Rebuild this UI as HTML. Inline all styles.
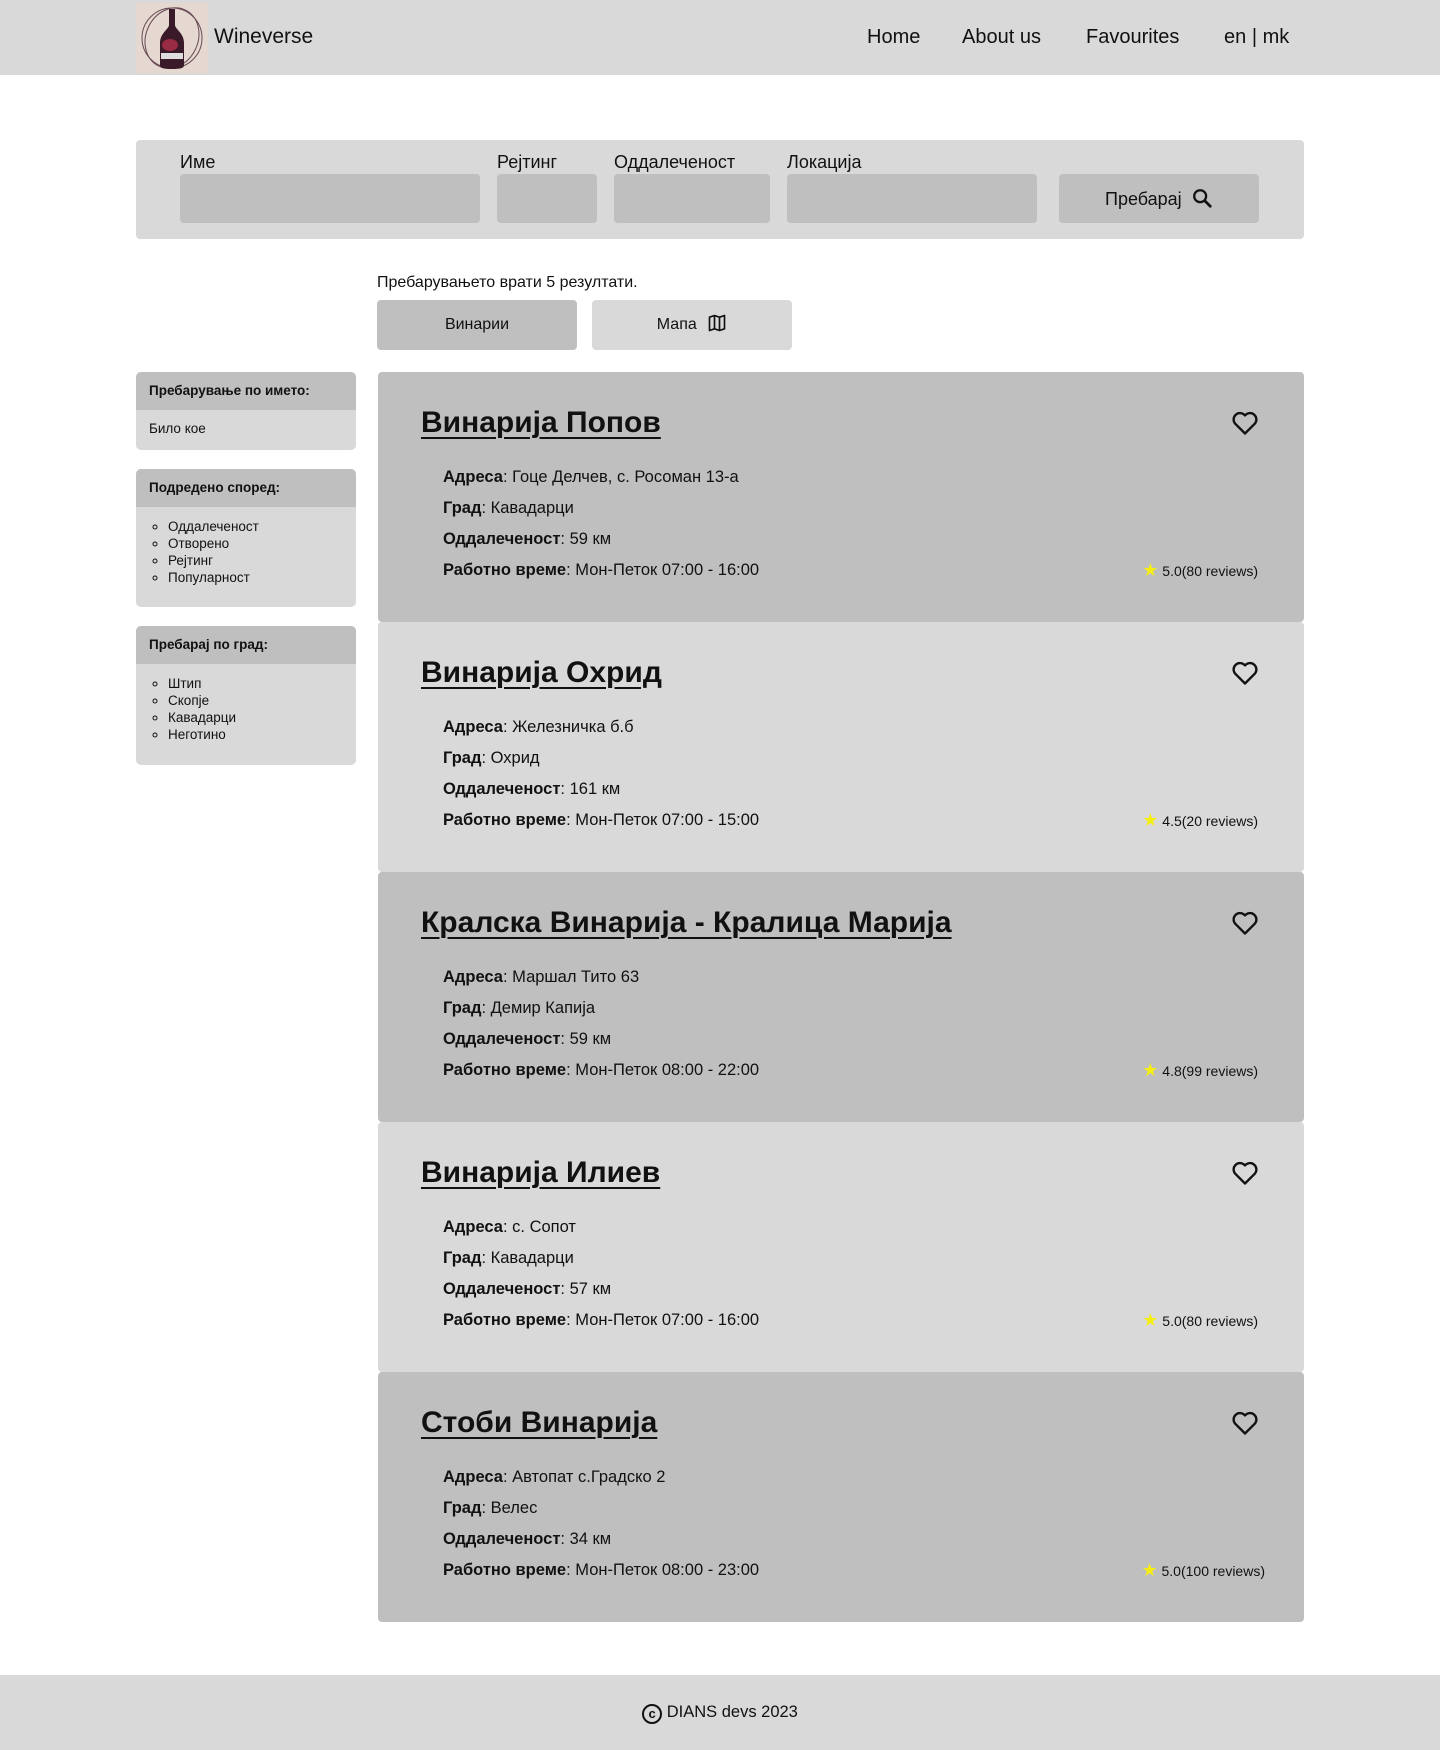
<!DOCTYPE html>
<html><head><meta charset="utf-8"><style>
*{box-sizing:border-box;margin:0;padding:0}
body{width:1440px;height:1750px;background:#fff;font-family:"Liberation Sans",sans-serif;color:#111;position:relative;overflow:hidden}
.abs{position:absolute}
header{position:absolute;left:0;top:0;width:1440px;height:75px;background:#d9d9d9}
.nav{position:absolute;top:26px;font-size:20px}
.sb{left:136px;top:140px;width:1168px;height:99px;background:#d9d9d9;border-radius:4px}
.lbl{position:absolute;top:152px;font-size:18px}
.inp{position:absolute;top:174px;height:49px;background:#bfbfbf;border-radius:4px}
.side{position:absolute;left:136px;width:220px;background:#d9d9d9;border-radius:5px;overflow:hidden;font-size:13.5px}
.side h4{background:#bfbfbf;height:38px;line-height:38px;padding-left:13px;font-size:13.5px}
.side ul{list-style:circle;padding:11px 0 0 32px;line-height:17px}
.card{position:absolute;left:378px;width:926px;height:250px;border-radius:4px}
.card h2{position:absolute;left:43px;top:34px;font-size:30px;font-weight:bold;text-decoration:underline;text-decoration-thickness:2px;text-underline-offset:5px}
.card .d{position:absolute;left:65px;font-size:16.5px}
.card .heart{position:absolute;left:853px;top:38px}
.card .r{position:absolute;right:46px;top:188px;font-size:14px}
.star{color:#f5ee10;font-size:18px}
</style></head><body>
<header>
<div class="abs" style="left:136px;top:3px;width:72px;height:70px;background:#e4d8d0">
<svg width="72" height="70" viewBox="0 0 72 70"><circle cx="36" cy="35" r="30" fill="none" stroke="#6a4a55" stroke-width="1"/><ellipse cx="36" cy="35" rx="26" ry="31" fill="none" stroke="#6a4a55" stroke-width="1" transform="rotate(25 36 35)"/><path d="M33 6h6v16c0 4 9 8 9 18v22c0 3-3 4-12 4s-12-1-12-4V40c0-10 9-14 9-18z" fill="#3a1a28"/><ellipse cx="34" cy="42" rx="8" ry="6" fill="#9a2b44"/><rect x="25" y="50" width="22" height="6" fill="#ddd"/></svg></div>
<div class="abs" style="left:214px;top:25px;font-size:21px">Wineverse</div>
<div class="nav" style="left:867px">Home</div>
<div class="nav" style="left:962px">About us</div>
<div class="nav" style="left:1086px">Favourites</div>
<div class="nav" style="left:1224px">en <span style="font-weight:300">|</span> mk</div>
</header>
<div class="abs sb"></div>
<div class="lbl" style="left:180px">Име</div>
<div class="lbl" style="left:497px">Рејтинг</div>
<div class="lbl" style="left:614px">Оддалеченост</div>
<div class="lbl" style="left:787px">Локација</div>
<div class="inp" style="left:180px;width:300px"></div>
<div class="inp" style="left:497px;width:100px"></div>
<div class="inp" style="left:614px;width:156px"></div>
<div class="inp" style="left:787px;width:250px"></div>
<div class="inp" style="left:1059px;width:200px;font-size:18px;line-height:51px;padding-left:46px">Пребарај <svg width="22" height="22" viewBox="0 0 24 24" style="vertical-align:-4px;margin-left:4px"><circle cx="10" cy="10" r="6.5" fill="none" stroke="#111" stroke-width="2.5"/><path d="M15 15l6 6" stroke="#111" stroke-width="3" stroke-linecap="round"/></svg></div>
<div class="abs" style="left:377px;top:274px;font-size:16px">Пребарувањето врати 5 резултати.</div>
<div class="abs" style="left:377px;top:300px;width:200px;height:50px;background:#bfbfbf;border-radius:4px;text-align:center;line-height:50px;font-size:16px">Винарии</div>
<div class="abs" style="left:592px;top:300px;width:200px;height:50px;background:#d9d9d9;border-radius:4px;text-align:center;line-height:50px;font-size:16px">Мапа <svg width="20" height="20" viewBox="0 0 24 24" style="vertical-align:-4px;margin-left:6px"><path d="M3 5l6-2 6 2 6-2v16l-6 2-6-2-6 2z M9 3v16 M15 5v16" fill="none" stroke="#111" stroke-width="2" stroke-linejoin="round"/></svg></div>

<div class="side" style="top:372px;height:78px"><h4>Пребарување по името:</h4><div style="padding:11px 13px">Било кое</div></div>
<div class="side" style="top:469px;height:138px"><h4>Подредено според:</h4><ul><li>Оддалеченост</li><li>Отворено</li><li>Рејтинг</li><li>Популарност</li></ul></div>
<div class="side" style="top:626px;height:139px"><h4>Пребарај по град:</h4><ul><li>Штип</li><li>Скопје</li><li>Кавадарци</li><li>Неготино</li></ul></div>

<div class="card" style="top:372px;background:#bfbfbf"><h2>Винарија Попов</h2>
<div class="d" style="top:96px"><b>Адреса</b>: Гоце Делчев, с. Росоман 13-а</div><div class="d" style="top:127px"><b>Град</b>: Кавадарци</div><div class="d" style="top:158px"><b>Оддалеченост</b>: 59 км</div><div class="d" style="top:189px"><b>Работно време</b>: Мон-Петок 07:00 - 16:00</div>
<svg class="heart" width="28" height="26" viewBox="0 0 24 22"><path d="M12 20L3.5 11.5A5 5 0 0 1 12 4.5a5 5 0 0 1 8.5 7z" fill="none" stroke="#111" stroke-width="2" stroke-linejoin="round"/></svg>
<div class="r"><span class="star">★</span> 5.0(80 reviews)</div></div>

<div class="card" style="top:622px;background:#d9d9d9"><h2>Винарија Охрид</h2>
<div class="d" style="top:96px"><b>Адреса</b>: Железничка б.б</div><div class="d" style="top:127px"><b>Град</b>: Охрид</div><div class="d" style="top:158px"><b>Оддалеченост</b>: 161 км</div><div class="d" style="top:189px"><b>Работно време</b>: Мон-Петок 07:00 - 15:00</div>
<svg class="heart" width="28" height="26" viewBox="0 0 24 22"><path d="M12 20L3.5 11.5A5 5 0 0 1 12 4.5a5 5 0 0 1 8.5 7z" fill="none" stroke="#111" stroke-width="2" stroke-linejoin="round"/></svg>
<div class="r"><span class="star">★</span> 4.5(20 reviews)</div></div>

<div class="card" style="top:872px;background:#bfbfbf"><h2>Кралска Винарија - Кралица Марија</h2>
<div class="d" style="top:96px"><b>Адреса</b>: Маршал Тито 63</div><div class="d" style="top:127px"><b>Град</b>: Демир Капија</div><div class="d" style="top:158px"><b>Оддалеченост</b>: 59 км</div><div class="d" style="top:189px"><b>Работно време</b>: Мон-Петок 08:00 - 22:00</div>
<svg class="heart" width="28" height="26" viewBox="0 0 24 22"><path d="M12 20L3.5 11.5A5 5 0 0 1 12 4.5a5 5 0 0 1 8.5 7z" fill="none" stroke="#111" stroke-width="2" stroke-linejoin="round"/></svg>
<div class="r"><span class="star">★</span> 4.8(99 reviews)</div></div>

<div class="card" style="top:1122px;background:#d9d9d9"><h2>Винарија Илиев</h2>
<div class="d" style="top:96px"><b>Адреса</b>: с. Сопот</div><div class="d" style="top:127px"><b>Град</b>: Кавадарци</div><div class="d" style="top:158px"><b>Оддалеченост</b>: 57 км</div><div class="d" style="top:189px"><b>Работно време</b>: Мон-Петок 07:00 - 16:00</div>
<svg class="heart" width="28" height="26" viewBox="0 0 24 22"><path d="M12 20L3.5 11.5A5 5 0 0 1 12 4.5a5 5 0 0 1 8.5 7z" fill="none" stroke="#111" stroke-width="2" stroke-linejoin="round"/></svg>
<div class="r"><span class="star">★</span> 5.0(80 reviews)</div></div>

<div class="card" style="top:1372px;background:#bfbfbf"><h2>Стоби Винарија</h2>
<div class="d" style="top:96px"><b>Адреса</b>: Автопат с.Градско 2</div><div class="d" style="top:127px"><b>Град</b>: Велес</div><div class="d" style="top:158px"><b>Оддалеченост</b>: 34 км</div><div class="d" style="top:189px"><b>Работно време</b>: Мон-Петок 08:00 - 23:00</div>
<svg class="heart" width="28" height="26" viewBox="0 0 24 22"><path d="M12 20L3.5 11.5A5 5 0 0 1 12 4.5a5 5 0 0 1 8.5 7z" fill="none" stroke="#111" stroke-width="2" stroke-linejoin="round"/></svg>
<div class="r" style="right:39px"><span class="star">★</span> 5.0(100 reviews)</div></div>

<div class="abs" style="left:0;top:1675px;width:1440px;height:75px;background:#d9d9d9;text-align:center;line-height:75px;font-size:16.5px"><span style="display:inline-block;width:20px;height:20px;border:2px solid #111;border-radius:50%;font-size:13px;line-height:15px;vertical-align:-1px;font-weight:bold">c</span> DIANS devs 2023</div>
</body></html>
